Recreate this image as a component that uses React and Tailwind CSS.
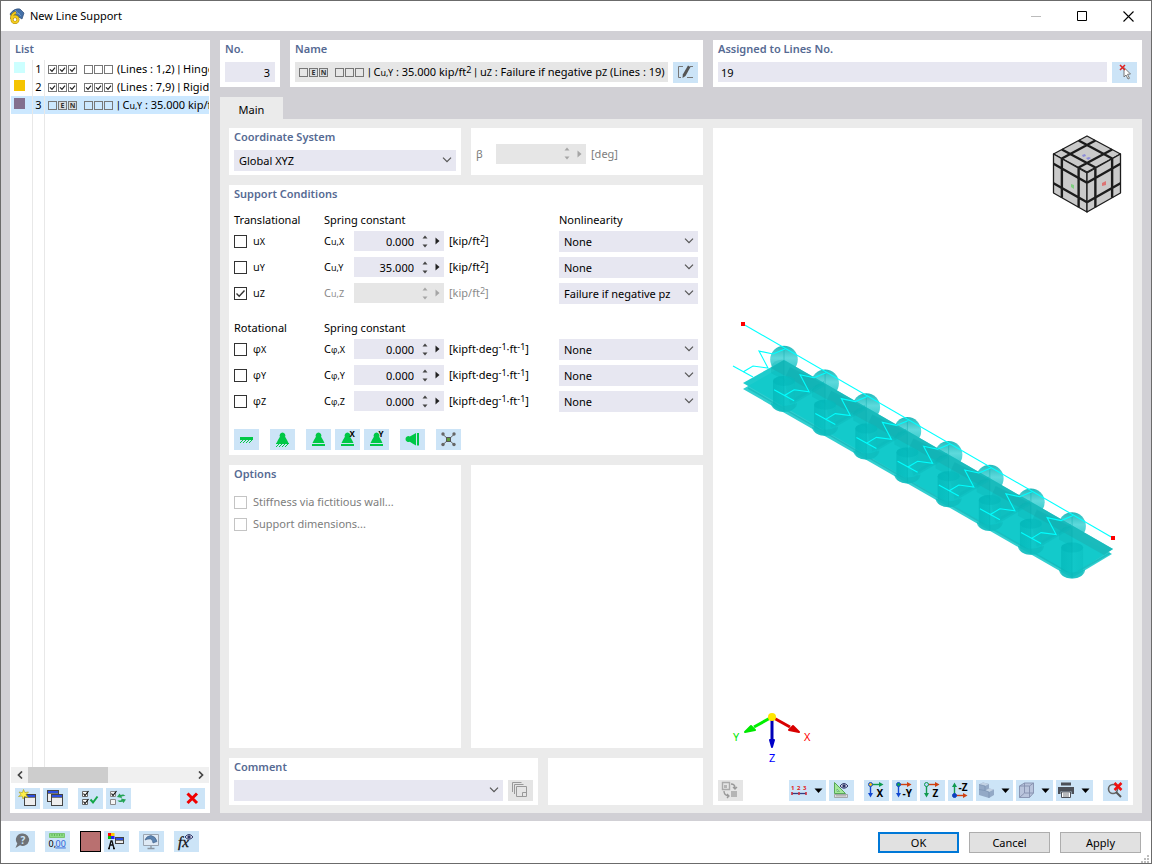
import { useState } from 'react';

const heading = 'text-[11px] leading-4 font-semibold text-[#566a93]';
const panel = 'bg-white px-[5px]';

function Sub({ children }) {
  return <span className="text-[9px]">{children}</span>;
}

function Sup({ children }) {
  return <sup className="top-0 align-[3px] text-[9px] leading-none">{children}</sup>;
}

// Roboto's bar is half as wide as the one in Noto Sans
function Bar() {
  return <span className="font-['Roboto',sans-serif]">|</span>;
}

function IconButton({ label, wide, disabled, children }) {
  return (
    <button
      type="button"
      aria-label={label}
      title={label}
      disabled={disabled}
      className={`h-[21px] shrink-0 ${wide ? 'w-[37px]' : 'w-[25px]'} ${disabled ? 'bg-[#e5e5e5]' : 'bg-[#cce4f7]'}`}
    >
      <svg viewBox={wide ? '0 0 37 21' : '0 0 25 21'} className="block h-full w-full">
        {children}
        {wide && <path d="M25.500 8.500h8l-4 4.500z" fill="#000" />}
      </svg>
    </button>
  );
}

function Chevron() {
  return (
    <svg viewBox="0 0 10 6" className="pointer-events-none absolute top-[7px] right-1 h-[6px] w-[10px]">
      <path d="M1 .7l4 4 4-4" fill="none" stroke="#555" strokeWidth="1.200" />
    </svg>
  );
}

function Select({ label, value, options = [value] }) {
  return (
    <div className="relative w-full">
      <select
        aria-label={label}
        defaultValue={value}
        className="block h-[21px] w-full appearance-none bg-[#e7e7f1] pl-[5px] pr-5 text-[11px] text-black"
      >
        {options.map((o) => (
          <option key={o}>{o}</option>
        ))}
      </select>
      <Chevron />
    </div>
  );
}

function Spinner({ label, value, disabled }) {
  const tone = disabled ? '#a5a5a5' : '#444';
  return (
    <div className={`flex h-5 w-[90px] shrink-0 items-center ${disabled ? 'bg-[#e6e6e6]' : 'bg-[#e7e7f1]'}`}>
      <input
        aria-label={label}
        defaultValue={value}
        disabled={disabled}
        className="h-5 w-[67px] min-w-0 bg-transparent pr-[7px] text-right text-[11px]"
      />
      <div className="flex w-2 flex-col gap-[5px]">
        <button type="button" aria-label={`Increase ${label}`} disabled={disabled} className="h-1 w-2">
          <svg viewBox="0 0 8 4" className="block h-1 w-2"><path d="M1.500 3.500L4 .5l2.500 3z" fill={tone} /></svg>
        </button>
        <button type="button" aria-label={`Decrease ${label}`} disabled={disabled} className="h-1 w-2">
          <svg viewBox="0 0 8 4" className="block h-1 w-2"><path d="M1.500 .5L4 3.500l2.500-3z" fill={tone} /></svg>
        </button>
      </div>
      <button type="button" aria-label={`Options for ${label}`} disabled={disabled} className="ml-1.5 h-2 w-[5px]">
        <svg viewBox="0 0 5 8" className="block h-2 w-[5px]"><path d="M.5 .5L4.500 4l-4 3.500z" fill={disabled ? '#a5a5a5' : '#222'} /></svg>
      </button>
    </div>
  );
}

function Check({ checked, disabled, label, children }) {
  const [on, setOn] = useState(!!checked);
  return (
    <label className={`flex items-center gap-1.5 ${disabled ? 'text-[#7d7d7d]' : ''}`}>
      <span className="relative block h-[13px] w-[13px]">
        <input
          type="checkbox"
          checked={on}
          disabled={disabled}
          aria-label={label}
          onChange={() => setOn(!on)}
          className={`block h-[13px] w-[13px] appearance-none border bg-white ${disabled ? 'border-[#c4c4c4]' : 'border-[#333]'}`}
        />
        {on && (
          <svg viewBox="0 0 13 13" className="pointer-events-none absolute inset-0 h-[13px] w-[13px]">
            <path d="M2.500 6.500L5.200 9.200 10.500 3.500" fill="none" stroke="#333" strokeWidth="1.400" />
          </svg>
        )}
      </span>
      <span>{children}</span>
    </label>
  );
}

/* Six degree-of-freedom boxes: v = checked, E / N = spring or nonlinearity, - = free */
function Dofs({ code }) {
  return (
    <span className="flex shrink-0 gap-[7px] pr-1">
      {code.split(' ').map((group, g) => (
        <span key={g} className="flex gap-px">
          {group.split('').map((c, i) => (
            <span
              key={i}
              className={`flex h-[9px] w-[9px] items-center justify-center border border-[#777] text-[7px] leading-none font-bold text-[#333] ${c === 'E' || c === 'N' ? 'bg-[#d9dde0]' : ''}`}
            >
              {c === 'v' && (
                <svg viewBox="0 0 7 7" className="h-[7px] w-[7px]">
                  <path d="M1 3.300l2 2 3-3.600" fill="none" stroke="#222" strokeWidth="1.200" />
                </svg>
              )}
              {(c === 'E' || c === 'N') && c}
            </span>
          ))}
        </span>
      ))}
    </span>
  );
}

const items = [
  { no: 1, color: 'bg-[#ccffff]', code: 'vvv ---', text: <>(Lines : 1,2) <Bar /> Hinged</> },
  { no: 2, color: 'bg-[#f5c400]', code: 'vvv vvv', text: <>(Lines : 7,9) <Bar /> Rigid</> },
  { no: 3, color: 'bg-[#83708f]', code: '-EN ---', text: <><Bar /> C<Sub>u,Y</Sub> : 35.000 kip/ft</> },
];

function MiniWindow({ x, y, w = 11, h = 11 }) {
  return (
    <g>
      <rect x={x + 0.5} y={y + 0.5} width={w} height={h} fill="#eee" stroke="#444" />
      <rect x={x + 1} y={y + 1} width={w - 1} height="2" fill="#2c4fe0" />
      <path d={`M${x + 1} ${y + 3.5}h${w - 1}`} stroke="#777" />
    </g>
  );
}

function SupportList() {
  const [selected, setSelected] = useState(3);
  return (
    <aside className="flex w-[200px] shrink-0 flex-col bg-white">
      <h2 className={`${heading} px-[5px] pt-[1px] pb-[3px]`}>List</h2>
      <ul className="px-px">
        {items.map((it) => (
          <li key={it.no}>
            <button
              type="button"
              onClick={() => setSelected(it.no)}
              className={`flex h-[18px] w-full items-center overflow-hidden text-left whitespace-nowrap ${selected === it.no ? 'bg-[#cce8ff]' : ''}`}
            >
              <span className="flex h-full w-[22px] shrink-0 border-r border-[#e8e8e8] pt-0.5 pl-[3px]">
                <span className={`h-[11px] w-[11px] ${it.color}`} />
              </span>
              <span className="h-full w-3 shrink-0 border-r border-[#e8e8e8] text-center leading-[18px]">{it.no}</span>
              <span className="flex items-center pl-[3px]">
                <Dofs code={it.code} />
                <span>{it.text}</span>
              </span>
            </button>
          </li>
        ))}
      </ul>
      <div className="flex flex-1 px-px">
        <div className="w-[22px] border-r border-[#e8e8e8]" />
        <div className="w-3 border-r border-[#e8e8e8]" />
      </div>
      <div className="mx-px flex h-4 items-center bg-[#f0f0f0]">
        <button type="button" aria-label="Scroll left" className="flex h-4 w-[17px] items-center justify-center">
          <svg viewBox="0 0 6 8" className="h-2 w-1.5"><path d="M5 .5L1.500 4 5 7.500" fill="none" stroke="#444" strokeWidth="1.700" /></svg>
        </button>
        <div className="h-4 flex-1"><div className="h-4 w-20 bg-[#cdcdcd]" /></div>
        <button type="button" aria-label="Scroll right" className="flex h-4 w-[17px] items-center justify-center">
          <svg viewBox="0 0 6 8" className="h-2 w-1.5"><path d="M1 .5L4.500 4 1 7.500" fill="none" stroke="#444" strokeWidth="1.700" /></svg>
        </button>
      </div>
      <div className="flex gap-[3px] px-[5px] pt-[5px] pb-1">
        <IconButton label="New">
          <MiniWindow x={9} y={6} />
          <path d="M8.500 1.500l1.300 3 3.700-.5-2.500 2.500 2 3-3.500-1-1.500 2.500-.8-3-3.700.5 2.500-2-2-2.500 3.400.7z" fill="#fff04a" stroke="#a89a10" strokeWidth=".6" />
        </IconButton>
        <IconButton label="Copy">
          <MiniWindow x={4} y={2} />
          <MiniWindow x={8} y={6} />
        </IconButton>
        <div className="w-1" />
        <IconButton label="Select all">
          <path d="M4.500 3.500h5v5h-5zM4.500 11.500h5v5h-5z" fill="#fff" stroke="#666" />
          <path d="M5.500 5.500l1.500 2 3.500-4.500M5.500 13.500l1.500 2 3.500-4.500" fill="none" stroke="#111" strokeWidth="1.200" />
          <path d="M12.500 11.500l2.500 3 4.500-6" fill="none" stroke="#13a648" strokeWidth="2" />
        </IconButton>
        <IconButton label="Invert selection">
          <path d="M4.500 3.500h5v5h-5zM4.500 11.500h5v5h-5z" fill="#f4f4f4" stroke="#888" />
          <path d="M5.500 5.500l1.500 2 3.500-4.500" fill="none" stroke="#111" strokeWidth="1.200" />
          <path d="M11 9l2.500-3.500 1.200 1.500c2-1 3.500-.5 4.800 1-2-.2-3 0-4 .6L16 10zM20 11.500L17.500 15l-1.200-1.500c-2 1-3.500.5-4.800-1 2 .2 3 0 4-.6L15 10.500z" fill="#25a355" />
        </IconButton>
        <div className="flex-1" />
        <IconButton label="Delete">
          <path d="M7.500 5.500l9.500 9.500M17 5.500L7.500 15" stroke="#f00000" strokeWidth="3" />
        </IconButton>
      </div>
    </aside>
  );
}

const translational = [
  { axis: 'X', value: '0.000', nonlinearity: 'None' },
  { axis: 'Y', value: '35.000', nonlinearity: 'None' },
  { axis: 'Z', value: '', nonlinearity: 'Failure if negative pz', checked: true },
];
const rotational = [
  { axis: 'X', value: '0.000', nonlinearity: 'None' },
  { axis: 'Y', value: '0.000', nonlinearity: 'None' },
  { axis: 'Z', value: '0.000', nonlinearity: 'None' },
];

// Noto draws phi with a straight stem, the looped form comes from Open Sans
function Symbol({ name }) {
  return <span className="font-['Open_Sans','Noto_Sans',sans-serif]">{name}</span>;
}

function ConditionRow({ row, symbol, unit }) {
  const name = `${symbol}${row.axis}`;
  return (
    <div className="grid h-[26px] grid-cols-[90px_30px_90px_115px_1fr] items-start">
      <div className="flex h-5 items-center">
        <Check checked={row.checked} label={name}><Symbol name={symbol} /><Sub>{row.axis}</Sub></Check>
      </div>
      <div className={`leading-5 ${row.checked ? 'text-[#8a8a8a]' : ''}`}>C<Sub><Symbol name={symbol} />,{row.axis}</Sub></div>
      <Spinner label={`Spring constant ${name}`} value={row.value} disabled={row.checked} />
      <div className={`pl-[5px] leading-5 whitespace-nowrap ${row.checked ? 'text-[#8a8a8a]' : ''}`}>{unit}</div>
      <Select
        label={`Nonlinearity ${name}`}
        value={row.nonlinearity}
        options={row.nonlinearity === 'None' ? ['None'] : ['None', row.nonlinearity]}
      />
    </div>
  );
}

const cone = 'M12.500 3.500a3 3 0 0 1 2.600 4.300L17 11l1.500 3h-12L8 11l1.900-3.200A3 3 0 0 1 12.500 3.500z';

function SupportConditions() {
  return (
    <section className={`${panel} pb-[5px]`}>
      <h2 className={`${heading} pt-px pb-2`}>Support Conditions</h2>
      <div className="grid h-[21px] grid-cols-[90px_235px_1fr] leading-5">
        <span>Translational</span>
        <span>Spring constant</span>
        <span>Nonlinearity</span>
      </div>
      {translational.map((row) => (
        <ConditionRow key={row.axis} row={row} symbol="u" unit={<>[kip/ft<Sup>2</Sup>]</>} />
      ))}
      <div className="mt-[9px] grid h-[21px] grid-cols-[90px_1fr] leading-5">
        <span>Rotational</span>
        <span>Spring constant</span>
      </div>
      {rotational.map((row) => (
        <ConditionRow key={row.axis} row={row} symbol="φ" unit={<>[kipft·deg<Sup>-1</Sup>·ft<Sup>-1</Sup>]</>} />
      ))}
      <div className="mt-3 flex gap-[11px]">
        <IconButton label="Rigid">
          <path d="M6 9.500h13" stroke="#00c846" strokeWidth="3" />
          <path d="M6 14l3-3M9 14l3-3M12 14l3-3M15 14l3-3" stroke="#00c846" />
        </IconButton>
        <IconButton label="Hinged">
          <path d={cone} fill="#00c846" />
          <path d="M6 18l3-3M9 18l3-3M12 18l3-3M15 18l3-3M6 14.500h13" stroke="#00c846" />
        </IconButton>
        <div className="flex gap-1">
          <IconButton label="Sliding">
            <path d={cone} fill="#00c846" /><path d="M6 16h13" stroke="#00c846" strokeWidth="2" />
          </IconButton>
          <IconButton label="Sliding in X">
            <path d={cone} fill="#00c846" /><path d="M6 16h13" stroke="#00c846" strokeWidth="2" />
            <text x="14.500" y="8" fontSize="8" fontWeight="700">X</text>
          </IconButton>
          <IconButton label="Sliding in Y">
            <path d={cone} fill="#00c846" /><path d="M6 16h13" stroke="#00c846" strokeWidth="2" />
            <text x="14.500" y="8" fontSize="8" fontWeight="700">Y</text>
          </IconButton>
        </div>
        <IconButton label="Horizontal support">
          <path d="M5.500 10a3 3 0 0 1 4.300-2.600L12.500 6l3.500-2v12.500l-3.500-2-2.700-1.700A3 3 0 0 1 5.500 10z" fill="#00c846" />
          <path d="M18 4v12.500" stroke="#00c846" strokeWidth="2" />
        </IconButton>
        <IconButton label="Free">
          <path d="M6.500 5l12 11M18.500 5l-12 11" stroke="#666" />
          <g fill="#666"><circle cx="7" cy="5" r="1.700" /><circle cx="18" cy="5" r="1.700" /><circle cx="7" cy="15.500" r="1.700" /><circle cx="18" cy="15.500" r="1.700" /></g>
          <rect x="10.500" y="8.500" width="4" height="4" fill="#5e9a3c" stroke="#555" />
        </IconButton>
      </div>
    </section>
  );
}

const bays = [0, 1, 2, 3, 4, 5, 6, 7];
const at = (i) => `translate(${(i * 41.15).toFixed(1)} ${(i * 23.8).toFixed(1)})`;

function NavigationCube() {
  // each face: origin corner and its two edge vectors
  const faces = [
    [1087, 136, 33.5, 18, -33.5, 18],
    [1053.5, 154, 33.5, 19, 0, 39],
    [1087, 173, 33.5, -19, 0, 39],
  ];
  const p = ([x, y, ax, ay, bx, by], s, t) => `${x + ax * s + bx * t} ${y + ay * s + by * t}`;
  return (
    <g stroke="#1c1c1c" strokeLinejoin="round">
      {faces.map((f, i) => (
        <g key={i}>
          <path d={`M${p(f, 0, 0)}L${p(f, 1, 0)}L${p(f, 1, 1)}L${p(f, 0, 1)}Z`} fill="#cacaca" strokeWidth="1.300" />
          {[0.25, 0.75].map((k) => (
            <path key={k} d={`M${p(f, k, 0)}L${p(f, k, 1)}M${p(f, 0, k)}L${p(f, 1, k)}`} strokeWidth="2.400" />
          ))}
        </g>
      ))}
      <g stroke="none">
        <path d="M1082 155l3-1 1 2-3 1zM1086 158l3-1 2 1-3 2z" fill="#8c8cd8" />
        <path d="M1071 184l3 1v4l-3-2z" fill="#7fcf7f" />
        <path d="M1102 183l4-2v4l-4 1z" fill="#dc7474" />
      </g>
    </g>
  );
}

function ModelView() {
  return (
    <svg viewBox="713 128 420 648" role="img" aria-label="Support preview" className="block w-full flex-1">
      <defs>
        <linearGradient id="ball" x1="0" y1="0" x2="0" y2="1">
          <stop offset="0" stopColor="#12b4b6" />
          <stop offset=".45" stopColor="#4fd6d9" />
          <stop offset="1" stopColor="#16bfc0" />
        </linearGradient>
        <linearGradient id="tube">
          <stop offset="0" stopColor="#00b4b6" />
          <stop offset=".5" stopColor="#06bcbe" />
          <stop offset=".52" stopColor="#10c6c8" />
          <stop offset="1" stopColor="#0abfc0" />
        </linearGradient>
      </defs>
      <NavigationCube />
      {bays.map((i) => (
        <g key={i} transform={at(i)}>
          <circle cx="784" cy="359.500" r="13.800" fill="url(#ball)" opacity=".92" />
          <path d="M784 346v14" stroke="#12aeb0" strokeWidth=".5" />
        </g>
      ))}
      <path d="M743 389l41-24 328 189-40 24z" fill="#31cfd0" />
      <path d="M743 383l41-23 329 189-41 26z" fill="#12c9ca" opacity=".95" />
      <path d="M784 360l329 189-9 6-333-187z" fill="#1ab6b8" opacity=".8" />
      <path d="M748 388l324 187 38-22" fill="none" stroke="#0fb4b6" strokeWidth="1.500" opacity=".6" />
      {bays.map((i) => (
        <g key={i} transform={at(i)}>
          <path d="M784 360a13 13 0 0 0-13 6v7l13 7z" fill="#08aaac" opacity=".25" />
          {i < 7 && <path d="M790 367l34 17-34 20-6-24z" fill="#06a6a8" opacity=".3" />}
          {i < 7 && <path d="M795 398l29-17v5l-29 17z" fill="#0bbabc" opacity=".5" />}
          <path d="M773 381v25a11 6 0 0 0 22 0v-25a11 5 0 0 0-22 0z" fill="url(#tube)" opacity=".6" />
          <ellipse cx="784" cy="381" rx="11" ry="5" fill="#00b2b4" opacity=".35" />
          <path d="M771 403q13 6 26 0a13 9 0 0 1-26 0z" fill="#0fbdbe" opacity=".8" />
          <path d="M784 361v50" stroke="#00a9ab" strokeWidth=".6" opacity=".4" />
        </g>
      ))}
      <g fill="none" stroke="#00ffff" strokeWidth="1.100">
        <path d="M743 324l370 214" />
        {bays.map((i) => (
          <path key={i} transform={at(i)} d="M733 366l20 11M743 372l10-6 15 2-9-17 14 3 12-5" />
        ))}
      </g>
      <path d="M741 322h4v4h-4zM1111 536h4v4h-4z" fill="#f00" />
      <g strokeWidth="3">
        <path d="M772 717l-18 10" stroke="#00f000" />
        <path d="M772 717l18 10" stroke="#d80000" />
        <path d="M772 717v23" stroke="#0000b8" />
      </g>
      <path d="M745 732l6-6 4 4z" fill="#00e800" stroke="#00e800" strokeWidth="2" strokeLinejoin="round" />
      <path d="M799 732l-10-2 4-4z" fill="#d80000" stroke="#d80000" strokeWidth="2" strokeLinejoin="round" />
      <path d="M772 747l-2-7h4z" fill="#0000c8" stroke="#0000c8" strokeWidth="2" strokeLinejoin="round" />
      <circle cx="772" cy="717" r="4" fill="#ffe600" />
      <text x="733" y="741" fontSize="11" fill="#00e800">Y</text>
      <text x="804" y="741" fontSize="11" fill="#f00">X</text>
      <text x="769" y="762" fontSize="11" fill="#00f">Z</text>
    </svg>
  );
}

/* origin dot, horizontal arrow, vertical arrow and axis letter */
function AxisIcon({ dot, h, v, text, up }) {
  const y = up ? 15.5 : 4.5;
  return (
    <>
      <path d={`M6.500 ${y}h10`} stroke={h} strokeWidth="1.400" />
      <path d={`M15 ${y - 2.5}l4.500 2.500-4.500 2.500z`} fill={h} />
      <path d={up ? 'M6.500 14V6' : 'M6.500 6v8'} stroke={v} strokeWidth="1.400" />
      <path d={up ? 'M4 7l2.500-4.500L9 7z' : 'M4 13l2.500 4.500L9 13z'} fill={v} />
      <circle cx="6.500" cy={y} r="2" fill={dot} stroke={up ? '#1040c0' : v} />
      <text x={text.length > 1 ? 10.5 : 12.5} y={up ? 11 : 16.5} fontSize="10" fontWeight="700">{text}</text>
    </>
  );
}

function Eye({ x, y }) {
  return (
    <g transform={`translate(${x} ${y})`}>
      <path d="M0 3q4-5 8 0-4 4.500-8 0z" fill="#e6e6f4" stroke="#2d3566" />
      <circle cx="4" cy="3" r="1.700" fill="#2d3566" />
    </g>
  );
}

function ViewToolbar() {
  return (
    <div className="flex gap-[3px] px-[5px] pt-1 pb-1">
      <IconButton label="Exchange view" disabled>
        <path d="M4.500 2.500h7v7h-7z" fill="none" stroke="#aaa" strokeWidth="1.400" />
        <path d="M6 5h3v3H6zM13 11h6v6h-6z" fill="#b5b5b5" />
        <path d="M13 4q4 0 4 4M15 7l2 2 2-2M6 11q0 4 4 5M9 14l2 2-2 2" fill="none" stroke="#999" strokeWidth="1.300" />
      </IconButton>
      <div className="flex-1" />
      <IconButton label="Numbering" wide>
        <g fontSize="6" fontWeight="700" fill="#e02020"><text x="2" y="10">1</text><text x="8" y="10">2</text><text x="14" y="10">3</text></g>
        <path d="M3 13.500h14" stroke="#333d80" strokeWidth="1.300" />
        <path d="M3 12v3M10 12v3M17 12v3" stroke="#d03040" strokeWidth="1.600" />
      </IconButton>
      <IconButton label="Show dimensions">
        <path d="M5.500 2.500v11h11z" fill="#a4e89a" stroke="#58a858" />
        <path d="M8 9v2.500h2.500z" fill="#cce4f7" stroke="#58a858" strokeWidth=".6" />
        <path d="M5.500 14.500h13v3h-13z" fill="#ddd" stroke="#999" strokeWidth=".8" />
        <path d="M8 15v1.500M10 15v1.500M12 15v1.500M14 15v1.500M16 15v1.500" stroke="#777" strokeWidth=".7" />
        <Eye x={11} y={3} />
      </IconButton>
      <div className="w-1" />
      <IconButton label="View in X"><AxisIcon dot="#f0c020" h="#109a50" v="#1048d0" text="X" /></IconButton>
      <IconButton label="View against Y"><AxisIcon dot="#12a050" h="#d04010" v="#1048d0" text="-Y" /></IconButton>
      <IconButton label="View in Z"><AxisIcon dot="#b8d8ff" h="#d04010" v="#109a50" text="Z" /></IconButton>
      <IconButton label="View against Z"><AxisIcon dot="#1040c0" h="#d04010" v="#109a50" text="-Z" up /></IconButton>
      <IconButton label="Rendering" wide>
        <path d="M3 4.500l4-2 6 1.500v4.500l5 1v5.500l-5 3-10-3z" fill="#93a9c6" />
        <path d="M3 4.500l4-2 6 1.500-4 2zM9 10.500l4-2 5 1-5 2.500z" fill="#c2d2e4" />
        <path d="M9 6v4.500l4 1.500v6M3 9.500l6 1M3 4.500l6 1.500" fill="none" stroke="#7890b0" strokeWidth=".7" />
      </IconButton>
      <IconButton label="Wireframe" wide>
        <path d="M3.500 6l5-3h9v10l-4 4.500h-10z" fill="#b9c4dc" stroke="#8490ae" strokeWidth=".9" />
        <path d="M3.500 6h10v11.500M13.500 6l4-3M8.500 3v10h9M8.500 13l-5 4.500" fill="none" stroke="#8490ae" strokeWidth=".9" />
      </IconButton>
      <IconButton label="Print" wide>
        <path d="M5 2.500h10v3H5zM2 7h16v7h-2.500v-2.500h-11V14H2z" fill="#4c5058" />
        <path d="M5.500 12h9v5.500h-9z" fill="#fff" stroke="#4c5058" />
        <path d="M7 14h6M7 16h6" stroke="#4c5058" strokeWidth=".8" />
      </IconButton>
      <div className="w-1" />
      <IconButton label="Reset view">
        <circle cx="10" cy="9" r="4.500" fill="none" stroke="#666" strokeWidth="1.600" />
        <path d="M13 12l5 5" stroke="#555" strokeWidth="2" />
        <path d="M11.500 3l7 7M18.500 3l-7 7" stroke="#f01010" strokeWidth="2.500" />
      </IconButton>
    </div>
  );
}

function Footer() {
  const button = 'h-[21px] w-[81px] bg-[#e1e1e1] text-[11px]';
  return (
    <footer className="flex h-[42px] items-start bg-white pt-2.5 pr-2.5 pl-[9px]">
      <div className="flex gap-2.5">
        <IconButton label="Help">
          <path d="M13 2.500a6.200 6.200 0 1 1-3 11.700L5.500 17l1.800-4.500A6.200 6.200 0 0 1 13 2.500z" fill="#6e7277" />
          <text x="10.500" y="12.500" fontSize="10" fontWeight="700" fill="#cce4f7">?</text>
        </IconButton>
        <IconButton label="Units and decimal places">
          <path d="M4.500 2.500h15v4h-15z" fill="#8ddc84" stroke="#79c470" />
          <path d="M7 3v2M9.500 3v2M12 3v2M14.500 3v2M17 3v2" stroke="#4fa048" strokeWidth=".7" />
          <text x="3.500" y="15.500" fontSize="9">0,</text>
          <text x="10.500" y="15.500" fontSize="9" fill="#2a62d8" textDecoration="underline">00</text>
        </IconButton>
        <div className="flex gap-[3px]">
          <button type="button" aria-label="Color" className="h-[21px] w-[21px] border border-black bg-[#b97070]" />
          <IconButton label="Display properties">
            <path d="M4 2h3v3H4z" fill="#f00" /><path d="M7 2h3.500v3H7z" fill="#fc0" /><path d="M4 5h3v3H4z" fill="#0b0" /><path d="M7 5h3.500v3H7z" fill="#22f" />
            <path d="M5 17.500L7 10h1l2 7.500M6 14h3M4 17.500h2M9 17.500h2" stroke="#111" strokeWidth="1.300" fill="none" />
            <MiniWindow x={11} y={6} w={8} h={6} />
          </IconButton>
        </div>
        <IconButton label="Graphic settings">
          <path d="M4.500 3.500h15v11h-15z" fill="#dfeaf5" stroke="#9aa4b0" />
          <path d="M6 9q1-4 6-4.500 5 1 6 6l-4 1.500q0-3-2.500-4Q9 7.500 6 9z" fill="#5b83b0" stroke="#3f5f88" strokeWidth=".6" />
          <path d="M12 15v2M8.500 17.500h7" stroke="#8a949f" strokeWidth="1.300" />
        </IconButton>
        <IconButton label="Formula">
          <text x="4" y="15.500" fontSize="15" fontStyle="italic" fill="#111" stroke="#111" strokeWidth=".3" fontFamily="Liberation Serif, serif">fx</text>
          <Eye x={11} y={3} />
        </IconButton>
      </div>
      <div className="ml-auto flex gap-2.5 pt-px">
        <button type="button" className={`${button} border-2 border-[#0078d7]`}>OK</button>
        <button type="button" className={`${button} border border-[#adadad]`}>Cancel</button>
        <button type="button" className={`${button} border border-[#adadad]`}>Apply</button>
      </div>
      <svg viewBox="0 0 8 8" className="-mr-2 h-2 w-2 self-end">
        <path d="M6 0h2v2H6zM3 3h2v2H3zM6 3h2v2H6zM0 6h2v2H0zM3 6h2v2H3zM6 6h2v2H6z" fill="#bdbdbd" />
      </svg>
    </footer>
  );
}

function TitleBar() {
  return (
    <header className="flex h-[30px] items-center bg-white pl-2">
      <svg viewBox="0 0 16 16" className="h-4 w-4">
        <path d="M1 6Q5 0 11 1l4 4-2 6-5-3-5 1z" fill="#4470a8" stroke="#2c4a74" strokeWidth=".7" />
        <path d="M3 5l8 1M6 2l6 6" stroke="#88add4" strokeWidth=".6" />
        <path d="M7 4.500Q2.500 6 2.500 11" fill="none" stroke="#a8860a" strokeWidth="3" />
        <circle cx="6" cy="11.500" r="3" fill="none" stroke="#a8860a" strokeWidth="3" />
        <path d="M7 4.500Q2.500 6 2.800 11" fill="none" stroke="#f4cc20" strokeWidth="1.800" />
        <circle cx="6" cy="11.500" r="3" fill="none" stroke="#f4cc20" strokeWidth="1.800" />
      </svg>
      <h1 className="pl-[5px] text-[11px]">New Line Support</h1>
      <div className="ml-auto flex">
        <button type="button" aria-label="Minimize" disabled className="flex h-[30px] w-[46px] items-center justify-center">
          <svg viewBox="0 0 11 11" className="h-[11px] w-[11px]"><path d="M0 5.500h10" stroke="#bbb" /></svg>
        </button>
        <button type="button" aria-label="Maximize" className="flex h-[30px] w-[46px] items-center justify-center">
          <svg viewBox="0 0 11 11" className="h-[11px] w-[11px]"><path d="M.5 .5h9v9h-9z" fill="none" stroke="#000" /></svg>
        </button>
        <button type="button" aria-label="Close" className="flex h-[30px] w-[46px] items-center justify-center">
          <svg viewBox="0 0 11 11" className="h-[11px] w-[11px]"><path d="M.5 .5l10 10M10.500 .5l-10 10" stroke="#000" strokeWidth="1.100" /></svg>
        </button>
      </div>
    </header>
  );
}

function HeaderFields() {
  return (
    <div className="flex h-[47px] gap-2.5">
      <div className="flex w-[483px] shrink-0 gap-2.5">
        <div className={`${panel} w-[60px] shrink-0`}>
          <label htmlFor="no" className={`${heading} block pt-px`}>No.</label>
          <input id="no" defaultValue="3" className="mt-[5px] block h-5 w-full bg-[#e7e7f1] pr-[5px] text-right text-[11px]" />
        </div>
        <div className={`${panel} min-w-0 flex-1`}>
          <h2 className={`${heading} pt-px`}>Name</h2>
          <div className="mt-[5px] flex gap-[5px]">
            <output aria-label="Name" className="flex h-5 min-w-0 flex-1 items-center bg-[#e6e6e6] pl-1 whitespace-nowrap">
              <Dofs code="-EN ---" />
              <span>
                <Bar /> C<Sub>u,Y</Sub> : 35.000 kip/ft<Sup>2</Sup> <Bar /> u<Sub>Z</Sub> : Failure if negative p<Sub>Z</Sub> (Lines : 19)
              </span>
            </output>
            <IconButton label="Edit name">
              <path d="M10 4.500H5.500v11H8M14 15.500h6M17 4.500h3" fill="none" stroke="#777" />
              <path d="M15 3.500l2.500 1.500-5 9-3 2 .3-3.500z" fill="#555" />
            </IconButton>
          </div>
        </div>
      </div>
      <div className={`${panel} flex-1`}>
        <label htmlFor="lines" className={`${heading} block pt-px`}>Assigned to Lines No.</label>
        <div className="mt-[5px] flex gap-[5px]">
          <input id="lines" defaultValue="19" className="h-5 min-w-0 flex-1 bg-[#e7e7f1] pl-[3px] text-[11px]" />
          <IconButton label="Select lines">
            <path d="M12 5.500l6.500 6.500-3 .3 2 4-1.500.7-2-4-2 2z" fill="#fff" stroke="#777" />
            <path d="M8 3l5 5M13 3L8 8" stroke="#e02020" strokeWidth="1.500" />
          </IconButton>
        </div>
      </div>
    </div>
  );
}

export default function App() {
  return (
    <div className="flex min-h-screen flex-col border border-[#6b6b6b] bg-[#d1d0d5] font-['Noto_Sans','Open_Sans',sans-serif] text-[11px] leading-4 text-black">
      <TitleBar />
      <main className="flex flex-1 gap-2.5 px-[9px] pt-[9px] pb-2">
        <SupportList />
        <div className="flex min-w-0 flex-1 flex-col">
          <HeaderFields />
          <div role="tablist" className="mt-2.5 flex">
            <button type="button" role="tab" aria-selected="true" className="h-[22px] w-[63px] bg-[#ebebeb] pt-1 text-[11px]">
              Main
            </button>
          </div>
          <div className="flex flex-1 gap-2.5 bg-[#ebebeb] px-[9px] pt-[9px] pb-2">
            <div className="flex w-[474px] shrink-0 flex-col gap-2.5">
              <div className="grid h-[47px] grid-cols-2 gap-2.5">
                <section className={panel}>
                  <h2 className={`${heading} pt-px pb-[5px]`}>Coordinate System</h2>
                  <Select label="Coordinate System" value="Global XYZ" />
                </section>
                <section className={`${panel} flex items-center pt-1`}>
                  <span className="w-5 text-[#7d7d7d]">β</span>
                  <Spinner label="Beta" value="" disabled />
                  <span className="pl-[5px] text-[#7d7d7d]">[deg]</span>
                </section>
              </div>
              <SupportConditions />
              <div className="grid flex-1 grid-cols-2 gap-2.5">
                <section className={panel}>
                  <h2 className={`${heading} pt-px pb-2.5`}>Options</h2>
                  <div className="flex flex-col gap-1.5 pt-[2px]">
                    <Check disabled>Stiffness via fictitious wall...</Check>
                    <Check disabled>Support dimensions...</Check>
                  </div>
                </section>
                <section className="bg-white" />
              </div>
              <div className="flex h-[47px] gap-2.5">
                <section className={`${panel} w-[309px]`}>
                  <h2 className={`${heading} pt-px pb-[5px]`}>Comment</h2>
                  <div className="flex gap-[5px]">
                    <Select label="Comment" value="" />
                    <IconButton label="Comment library" disabled>
                      <path d="M4.500 12V2.500h9M6.500 14V4.500h9M8.500 6.500h10v10h-10z" fill="none" stroke="#999" />
                      <path d="M14.500 16.500v-4h4" fill="none" stroke="#999" />
                    </IconButton>
                  </div>
                </section>
                <section className="flex-1 bg-white" />
              </div>
            </div>
            <section className="flex min-w-0 flex-1 flex-col bg-white">
              <ModelView />
              <ViewToolbar />
            </section>
          </div>
        </div>
      </main>
      <Footer />
    </div>
  );
}
